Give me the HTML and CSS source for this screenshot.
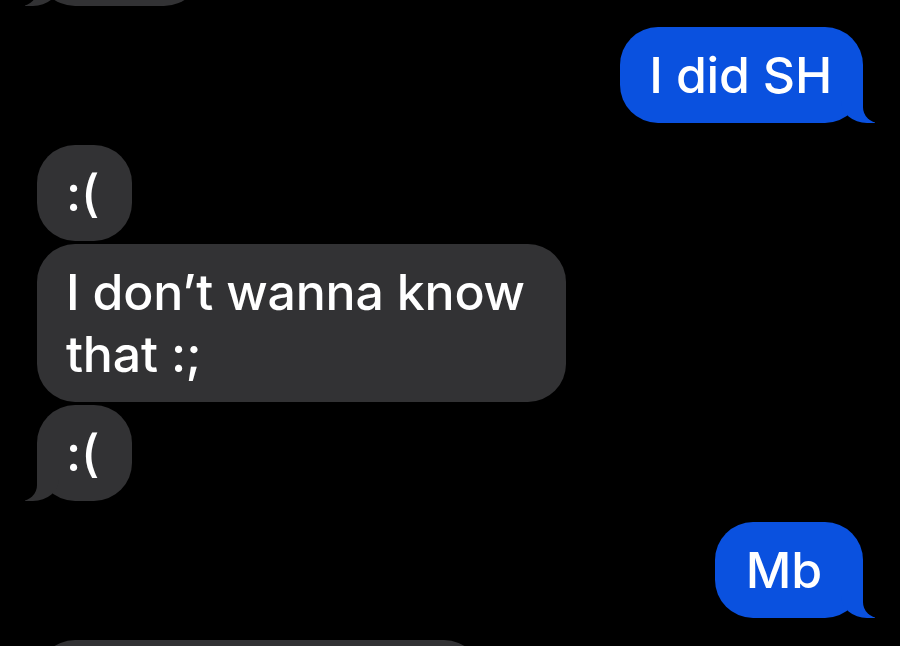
FILE: index.html
```html
<!DOCTYPE html>
<html lang="en">
<head>
<meta charset="utf-8">
<title>Messages</title>
<link rel="stylesheet" href="styles.css">
</head>
<body>
<main class="thread">
  <div class="group group-top received">
    <div class="bubble in tail bubble-partial-top"></div>
  </div>
  <div class="group sent">
    <div class="bubble out tail">I did SH</div>
  </div>
  <div class="group received group-c">
    <div class="bubble in">:(</div>
    <div class="bubble in wide">I don’t wanna know that :;</div>
    <div class="bubble in tail">:(</div>
  </div>
  <div class="group sent group-d">
    <div class="bubble out tail short">Mb</div>
  </div>
  <div class="group received group-e">
    <div class="bubble in bubble-partial-bottom"></div>
  </div>
</main>
</body>
</html>
```
FILE: styles.css
```css
html, body {
  margin: 0;
  padding: 0;
  background: #000;
  height: 100%;
  overflow: hidden;
}

.thread {
  display: flex;
  flex-direction: column;
  padding: 0 37px;
  margin-top: -90px;
  font-family: Inter, "Noto Sans", sans-serif;
  font-size: 50px;
  font-weight: 500;
  letter-spacing: -0.2px;
  line-height: 62px;
  color: #fff;
}

.group {
  display: flex;
  flex-direction: column;
  gap: 3px;
}

.group.sent { align-items: flex-end; margin-top: 21px; }
.group.received { align-items: flex-start; }
.group-c { margin-top: 22px; }
.group-d { margin-top: 23px; }
.group-e { margin-top: 22px; }

.bubble {
  position: relative;
  padding: 17px 30px 17px 29px;
  border-radius: 38px;
  min-width: 36px;
  min-height: 62px;
}

.bubble.in { background: #323234; }
.bubble.out { background: #0a51df; padding-left: 29px; padding-right: 31px; }
.bubble.out.short { padding-left: 31px; padding-right: 41px; }

.bubble.wide { max-width: 470px; }

.bubble-partial-top { width: 106px; }
.bubble-partial-bottom { width: 386px; }

/* bubble tails */
.bubble.tail::before,
.bubble.tail::after {
  content: "";
  position: absolute;
  bottom: 0;
  height: 40px;
}

.bubble.out.tail::before {
  right: -12px;
  width: 34px;
  background: #0a51df;
  border-bottom-left-radius: 26px 22px;
}
.bubble.out.tail::after {
  right: -42px;
  width: 42px;
  background: #000;
  border-bottom-left-radius: 16px;
}

.bubble.in.tail::before {
  left: -12px;
  width: 34px;
  background: #323234;
  border-bottom-right-radius: 26px 22px;
}
.bubble.in.tail::after {
  left: -42px;
  width: 42px;
  background: #000;
  border-bottom-right-radius: 16px;
}
```
